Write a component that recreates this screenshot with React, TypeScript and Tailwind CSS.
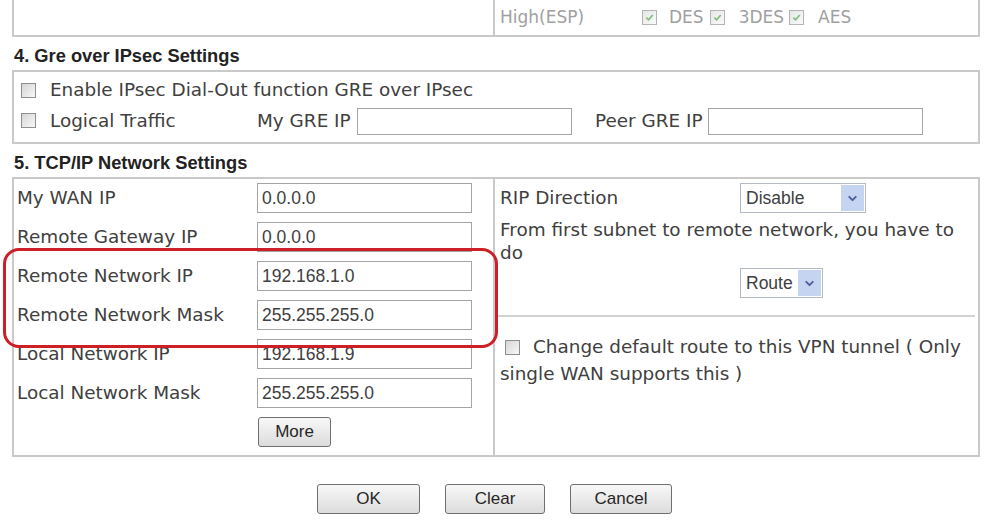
import { ChevronDown } from 'lucide-react';

const label = "font-['DejaVu_Sans',sans-serif] text-[18.4px] text-[#404040]";
const value = "font-['Liberation_Sans',Arial,sans-serif] text-[17.5px] text-[#404040]";

function Box({ checked = false }: { checked?: boolean }) {
  if (checked) {
    return (
      <span className="inline-flex w-[15px] h-[15px] shrink-0 items-center justify-center border border-[#b4b4b4] bg-gradient-to-br from-[#e6e6e6] to-[#fafafa]">
        <svg viewBox="0 0 10 10" className="w-[9px] h-[9px]">
          <path d="M1.5 5.2 L4 7.6 L8.6 2.2" fill="none" stroke="#7cbf7c" strokeWidth="1.8" />
        </svg>
      </span>
    );
  }
  return (
    <span className="inline-block w-[15px] h-[15px] shrink-0 border border-[#8e8e8e] bg-gradient-to-br from-[#d6d6d6] to-[#f7f7f7] align-[-2px]" />
  );
}

function Field({ text = '', w = 'w-[215px]', h = 'h-[30px]' }: { text?: string; w?: string; h?: string }) {
  return (
    <div className={`${w} ${h} flex items-center px-[4px] border border-[#a4a4a4] bg-white ${value}`}>{text}</div>
  );
}

function Select({ text, w }: { text: string; w: string }) {
  return (
    <div className={`${w} h-[30px] flex border border-[#b3b9c2] bg-white`}>
      <span className={`flex-1 flex items-center pl-[5px] ${value}`}>{text}</span>
      <span className="w-[23px] m-[1px] flex items-center justify-center bg-[#c5d4f0]">
        <ChevronDown className="w-[13px] h-[13px] text-[#4b5f9c]" strokeWidth={3.5} />
      </span>
    </div>
  );
}

function Btn({ text, w }: { text: string; w: string }) {
  return (
    <button className={`${w} h-[30px] flex items-center justify-center rounded-[3px] border border-[#6f6f6f] bg-gradient-to-b from-[#f8f8f8] to-[#dcdcdc] font-['Liberation_Sans',Arial,sans-serif] text-[17px] text-[#262626]`}>
      {text}
    </button>
  );
}

const heading = "h-[33px] flex items-center pt-[5px] pl-[2px] font-['Liberation_Sans',Arial,sans-serif] font-bold text-[18.3px] text-[#222]";

export default function App() {
  const rows = [
    ['My WAN IP', '0.0.0.0'],
    ['Remote Gateway IP', '0.0.0.0'],
    ['Remote Network IP', '192.168.1.0'],
    ['Remote Network Mask', '255.255.255.0'],
    ['Local Network IP', '192.168.1.9'],
    ['Local Network Mask', '255.255.255.0'],
  ];

  return (
    <div className="relative w-[985px] h-[521px] overflow-hidden bg-white">
      <div className="ml-[12px] w-[968px]">
        {/* tail of section 3 */}
        <div className="h-[37px] flex border-x-2 border-b-2 border-[#c9c9c9]">
          <div className="w-[481px] border-r-2 border-[#c9c9c9]" />
          <div className="flex items-center pl-[5px] font-['DejaVu_Sans',sans-serif] text-[17px] text-[#a0a0a0]">
            <span className="w-[142px]">High(ESP)</span>
            <Box checked />
            <span className="ml-[12px] mr-[6px]">DES</span>
            <Box checked />
            <span className="ml-[14px] mr-[5px]">3DES</span>
            <Box checked />
            <span className="ml-[14px]">AES</span>
          </div>
        </div>

        <h3 className={heading}>4. Gre over IPsec Settings</h3>
        <div className="h-[74px] flex flex-col border-2 border-[#c9c9c9] pl-[7px] pt-[4px]">
          <div className={`h-[28px] flex items-center ${label}`}>
            <Box />
            <span className="ml-[14px]">Enable IPsec Dial-Out function GRE over IPsec</span>
          </div>
          <div className={`h-[34px] flex items-center ${label}`}>
            <div className="w-[236px] flex items-center">
              <Box />
              <span className="ml-[14px]">Logical Traffic</span>
            </div>
            <span className="w-[100px]">My GRE IP</span>
            <Field h="h-[27px]" />
            <span className="ml-[23px] w-[113px]">Peer GRE IP</span>
            <Field h="h-[27px]" />
          </div>
        </div>

        <h3 className={heading}>5. TCP/IP Network Settings</h3>
        <div className="h-[280px] flex border-2 border-[#c9c9c9]">
          <div className="w-[481px] flex flex-col gap-[9px] pt-[4px] pl-[3px] border-r-2 border-[#c9c9c9]">
            {rows.map(([l, v]) => (
              <div key={l} className="h-[30px] flex items-center">
                <span className={`w-[240px] ${label}`}>{l}</span>
                <Field text={v} />
              </div>
            ))}
            <div className="h-[30px] pl-[241px]">
              <Btn text="More" w="w-[73px]" />
            </div>
          </div>
          <div className={`flex-1 flex flex-col pt-[4px] ${label}`}>
            <div className="h-[30px] flex items-center pl-[5px]">
              <span className="w-[240px]">RIP Direction</span>
              <Select text="Disable" w="w-[126px]" />
            </div>
            <p className="mt-[5px] pl-[5px] leading-[23px]">
              From first subnet to remote network, you have to
              <br />
              do
            </p>
            <div className="mt-[4px] pl-[245px]">
              <Select text="Route" w="w-[83px]" />
            </div>
            <div className="mt-[17px] mr-[3px] border-t-2 border-[#d2d2d2]" />
            <p className="pt-[16px] pl-[5px] leading-[27px]">
              <span className="ml-[5px] mr-[13px]">
                <Box />
              </span>
              Change default route to this VPN tunnel ( Only
              <br />
              single WAN supports this )
            </p>
          </div>
        </div>
      </div>

      <div className="mt-[27px] flex justify-center gap-[25px] pl-[4px]">
        <Btn text="OK" w="w-[103px]" />
        <Btn text="Clear" w="w-[100px]" />
        <Btn text="Cancel" w="w-[102px]" />
      </div>

      {/* highlight */}
      <div className="absolute left-[3px] top-[248px] w-[495px] h-[100px] rounded-[16px] border-[3px] border-[#cc1f27]" />
    </div>
  );
}
